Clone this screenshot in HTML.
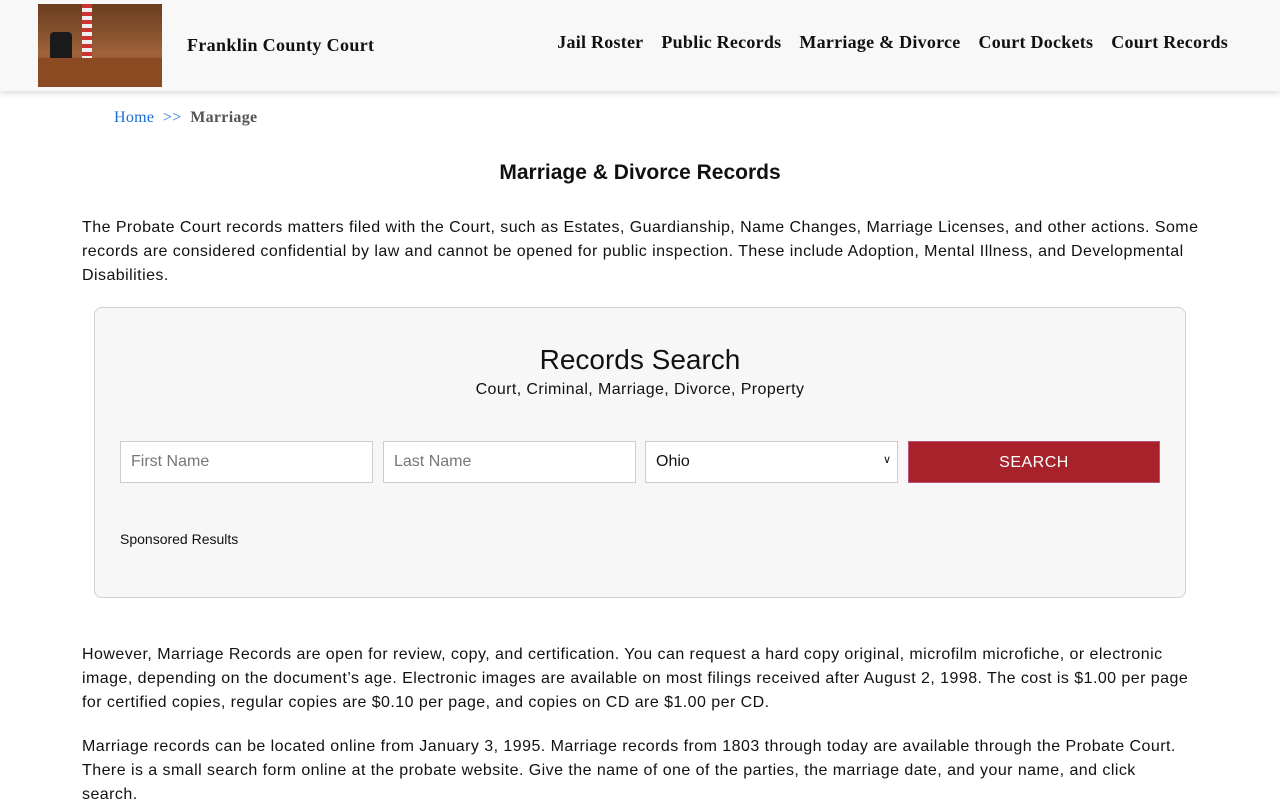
<!DOCTYPE html>
<html><head><meta charset="utf-8"><style>
*{box-sizing:border-box;margin:0;padding:0}
body{width:1280px;height:800px;overflow:hidden;background:#fff;font-family:"Liberation Sans",sans-serif;color:#111}
header{position:absolute;left:0;top:0;width:1280px;height:91px;background:#f8f8f8;box-shadow:0 2px 6px rgba(0,0,0,.15)}
.img{position:absolute;left:38px;top:4px;width:124px;height:83px;background:linear-gradient(180deg,#6b3d1f 0%,#8a5530 40%,#a0623a 60%,#6a3a1c 100%)}
.img .chair{position:absolute;left:12px;top:28px;width:22px;height:30px;background:#1a1a1a;border-radius:4px}
.img .flag{position:absolute;left:44px;top:0;width:10px;height:55px;background:repeating-linear-gradient(180deg,#c33 0 4px,#eee 4px 8px)}
.img .desk{position:absolute;left:0;top:54px;width:124px;height:29px;background:#8b4a22}
.brand{position:absolute;left:187px;top:35px;font-family:"Liberation Serif",serif;font-weight:bold;font-size:18px;letter-spacing:.35px;color:#111}
nav{position:absolute;right:52px;top:32px;font-family:"Liberation Serif",serif;font-weight:bold;font-size:18px;letter-spacing:.25px;white-space:nowrap}
nav span{margin-left:18px}
.bc{position:absolute;left:114px;top:109px;font-family:"Liberation Serif",serif;font-size:16px;letter-spacing:.3px}
.bc a{color:#1a6fd6}
.bc b{color:#555}
h1{position:absolute;left:0;width:1280px;top:161px;text-align:center;font-size:21px;font-weight:bold}
p{position:absolute;left:82px;width:1112px;font-size:16px;line-height:24px;color:#111;letter-spacing:.45px}
.box{position:absolute;left:94px;top:307px;width:1092px;height:291px;background:#f7f7f7;border:1px solid #d0d0d0;border-radius:8px}
.box h2{position:absolute;top:36px;width:100%;text-align:center;font-weight:normal;font-size:28px}
.box .sub{position:absolute;top:73px;width:100%;text-align:center;font-size:16px;letter-spacing:.4px}
.f{position:absolute;top:133px;width:253px;height:42px;background:#fff;border:1px solid #ccc;font-size:16px;padding:11px 10px;color:#777}
.btn{position:absolute;top:133px;left:813px;width:252px;height:42px;background:#a8222c;color:#fff;text-align:center;line-height:42px;font-size:16px;letter-spacing:.5px;border:1px solid #b57}
.sp{position:absolute;left:25px;top:223px;font-size:14px}
</style></head><body>
<header>
<div class="img"><div class="flag"></div><div class="chair"></div><div class="desk"></div></div>
<div class="brand">Franklin County Court</div>
<nav><span>Jail Roster</span><span>Public Records</span><span>Marriage &amp; Divorce</span><span>Court Dockets</span><span>Court Records</span></nav>
</header>
<div class="bc"><a>Home</a> &nbsp;<a>&gt;&gt;</a>&nbsp; <b>Marriage</b></div>
<h1>Marriage &amp; Divorce Records</h1>
<p style="top:216px;width:1125px">The Probate Court records matters filed with the Court, such as Estates, Guardianship, Name Changes, Marriage Licenses, and other actions. Some records are considered confidential by law and cannot be opened for public inspection. These include Adoption, Mental Illness, and Developmental Disabilities.</p>
<div class="box">
<h2>Records Search</h2>
<div class="sub">Court, Criminal, Marriage, Divorce, Property</div>
<div class="f" style="left:25px">First Name</div>
<div class="f" style="left:288px">Last Name</div>
<div class="f" style="left:550px;color:#111">Ohio<span style="position:absolute;right:6px;top:11px;font-size:11px">&#8744;</span></div>
<div class="btn">SEARCH</div>
<div class="sp">Sponsored Results</div>
</div>
<p style="top:643px">However, Marriage Records are open for review, copy, and certification. You can request a hard copy original, microfilm microfiche, or electronic image, depending on the document’s age. Electronic images are available on most filings received after August 2, 1998. The cost is $1.00 per page for certified copies, regular copies are $0.10 per page, and copies on CD are $1.00 per CD.</p>
<p style="top:735px">Marriage records can be located online from January 3, 1995. Marriage records from 1803 through today are available through the Probate Court. There is a small search form online at the probate website. Give the name of one of the parties, the marriage date, and your name, and click search.</p>
</body></html>
